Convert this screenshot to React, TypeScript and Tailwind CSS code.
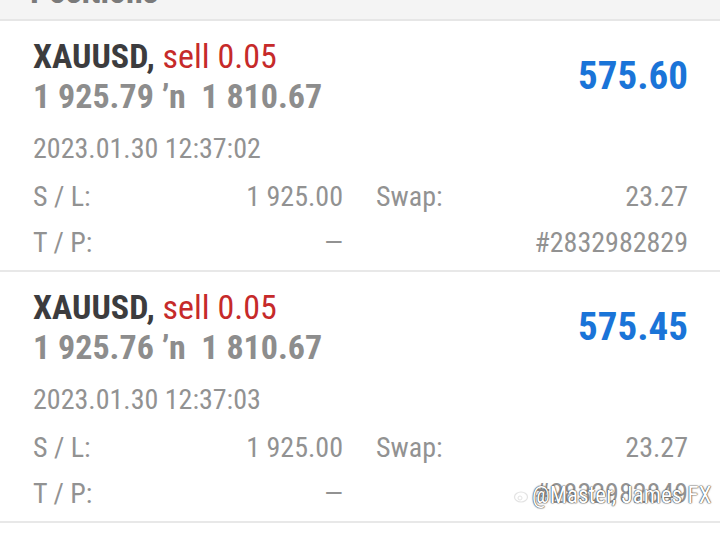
type Pos = {
  open: string;
  current: string;
  profit: string;
  time: string;
  sl: string;
  tp: string;
  swap: string;
  ticket: string;
};

const positions: Pos[] = [
  {
    open: "1 925.79",
    current: "1 810.67",
    profit: "575.60",
    time: "2023.01.30 12:37:02",
    sl: "1 925.00",
    tp: "—",
    swap: "23.27",
    ticket: "#2832982829",
  },
  {
    open: "1 925.76",
    current: "1 810.67",
    profit: "575.45",
    time: "2023.01.30 12:37:03",
    sl: "1 925.00",
    tp: "—",
    swap: "23.27",
    ticket: "#2832982849",
  },
];

function Card({ p }: { p: Pos }) {
  return (
    <div className="border-b-2 border-[#e8e8e8] bg-white pl-[33px] pr-[32px] pt-[15px] pb-[4px]">
      <div className="flex items-center justify-between">
        <div className="text-[34px] font-bold leading-[40px]">
          <div className="text-[#3c3c3e]">
            XAUUSD, <span className="font-normal text-[#c62a2a]">sell 0.05</span>
          </div>
          <div className="text-[#8d8d8d]">
            {p.open} ’n&nbsp; {p.current}
          </div>
        </div>
        <div className="text-[39px] font-bold leading-none text-[#1a74d8]">{p.profit}</div>
      </div>
      <div className="mt-[10px] mb-[2px] text-[28px] leading-[46px] text-[#929292]">{p.time}</div>
      <div className="grid grid-cols-[310px_1fr] gap-x-[33px] text-[28px] leading-[46px] text-[#929292]">
        <div className="flex justify-between">
          <span>S / L:</span>
          <span>{p.sl}</span>
        </div>
        <div className="flex justify-between">
          <span>Swap:</span>
          <span>{p.swap}</span>
        </div>
        <div className="flex justify-between">
          <span>T / P:</span>
          <span>{p.tp}</span>
        </div>
        <div className="flex justify-end">
          <span>{p.ticket}</span>
        </div>
      </div>
    </div>
  );
}

export default function App() {
  return (
    <div className="relative h-[534px] w-[720px] overflow-hidden bg-white font-['Roboto_Condensed',Roboto,sans-serif]">
      <div className="h-[21px] overflow-hidden border-b-2 border-[#e6e6e6] bg-[#f4f4f4] pl-[30px]">
        <div className="-mt-[29px] text-[34px] font-bold leading-[40px] text-[#7a7a7a]">Positions</div>
      </div>
      {positions.map((p) => (
        <Card key={p.ticket} p={p} />
      ))}
      <div className="absolute left-[513px] top-[481px] flex items-center gap-[3px] text-[23px] leading-[30px] text-white [text-shadow:0_0_1px_#444,0_0_1px_#444,0_0_2px_#666]">
        <svg width="16" height="16" viewBox="0 0 16 16" className="opacity-40">
          <ellipse cx="8" cy="9" rx="6.5" ry="5" fill="none" stroke="#bbb" strokeWidth="1.2" />
          <circle cx="7" cy="10" r="2" fill="none" stroke="#bbb" strokeWidth="1" />
        </svg>
        <span>@Master, James FX</span>
      </div>
    </div>
  );
}
